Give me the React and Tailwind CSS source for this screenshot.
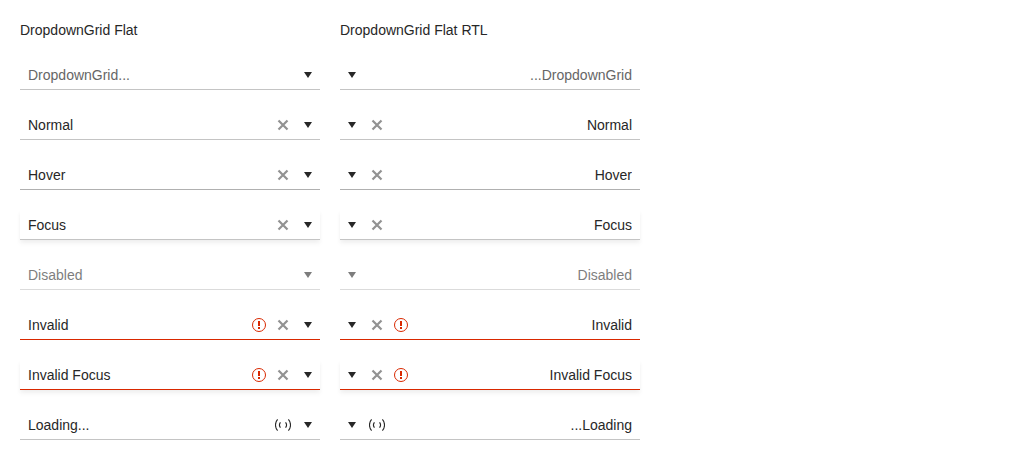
import React from "react";
import clsx from "clsx";

function CaretIcon() {
  return (
    <svg viewBox="0 0 16 16" className="size-4 fill-current" aria-hidden="true">
      <path d="M4 5h8l-4 6z" />
    </svg>
  );
}

function ClearIcon() {
  return (
    <svg viewBox="0 0 16 16" className="size-4" fill="none" stroke="currentColor" strokeWidth="2.2" aria-hidden="true">
      <path d="M3.5 3.5l9 9M12.5 3.5l-9 9" />
    </svg>
  );
}

function WarningIcon() {
  return (
    <svg viewBox="0 0 16 16" className="size-4" aria-hidden="true">
      <circle cx="8" cy="8" r="6.5" fill="none" stroke="currentColor" />
      <path d="M7 4h2v5H7zM7 10h2v2H7z" fill="currentColor" />
    </svg>
  );
}

function LoadingIcon() {
  return (
    <svg viewBox="0 0 16 16" className="size-4" fill="none" stroke="currentColor" aria-hidden="true">
      <path d="M2.6 2.4a8.4 8.4 0 0 0 0 11.2M13.4 2.4a8.4 8.4 0 0 1 0 11.2" strokeWidth="1.1" />
      <path d="M5.4 5.3a4.6 4.6 0 0 0 0 5.4M10.6 5.3a4.6 4.6 0 0 1 0 5.4" strokeWidth="1.1" />
    </svg>
  );
}

const rows = [
  { name: "Empty", value: "", placeholder: "DropdownGrid..." },
  { name: "Normal", value: "Normal", clearable: true },
  { name: "Hover", value: "Hover", clearable: true, hover: true },
  { name: "Focus", value: "Focus", clearable: true, focus: true },
  { name: "Disabled", value: "Disabled", disabled: true },
  { name: "Invalid", value: "Invalid", clearable: true, invalid: true },
  { name: "Invalid Focus", value: "Invalid Focus", clearable: true, invalid: true, focus: true },
  { name: "Loading", value: "Loading...", loading: true },
];

function DropdownGrid({ name, value, placeholder, clearable, hover, focus, disabled, invalid, loading }) {
  return (
    <div
      className={clsx(
        "flex items-stretch border-y border-t-transparent",
        invalid ? "border-b-[#d92800]" : hover ? "border-b-[#b0b0b0]" : "border-b-[#c4c4c4]",
        focus && "shadow-[0_2px_4px_0_rgba(0,0,0,0.03),0_4px_5px_0_rgba(0,0,0,0.04)]",
        disabled && "opacity-60"
      )}
    >
      <input
        type="text"
        aria-label={name}
        aria-invalid={invalid}
        disabled={disabled}
        defaultValue={value}
        placeholder={placeholder}
        className="h-7 min-w-0 flex-1 bg-transparent px-2 leading-5 outline-none placeholder:text-[#666666]"
      />
      {invalid && (
        <span className="flex w-6 items-center justify-center text-[#d92800]">
          <WarningIcon />
        </span>
      )}
      {clearable && (
        <button type="button" aria-label={`Clear ${name}`} className="flex w-6 items-center justify-center opacity-50">
          <ClearIcon />
        </button>
      )}
      {loading && (
        <span className="flex w-6 items-center justify-center">
          <LoadingIcon />
        </span>
      )}
      <button
        type="button"
        aria-label={`Open ${name}`}
        disabled={disabled}
        className="ms-px flex w-6 items-center justify-center"
      >
        <CaretIcon />
      </button>
    </div>
  );
}

function Column({ title, dir }) {
  return (
    <section className="flex min-w-0 max-w-75 flex-1 flex-col gap-5">
      <h2>{title}</h2>
      <div dir={dir} className="flex flex-col gap-5">
        {rows.map((row) => (
          <DropdownGrid key={row.name} {...row} />
        ))}
      </div>
    </section>
  );
}

export default function App() {
  return (
    <main className="flex gap-5 bg-white p-5 font-['Liberation_Sans',Arial,sans-serif] text-sm leading-5 text-[#272727]">
      <Column title="DropdownGrid Flat" dir="ltr" />
      <Column title="DropdownGrid Flat RTL" dir="rtl" />
    </main>
  );
}
